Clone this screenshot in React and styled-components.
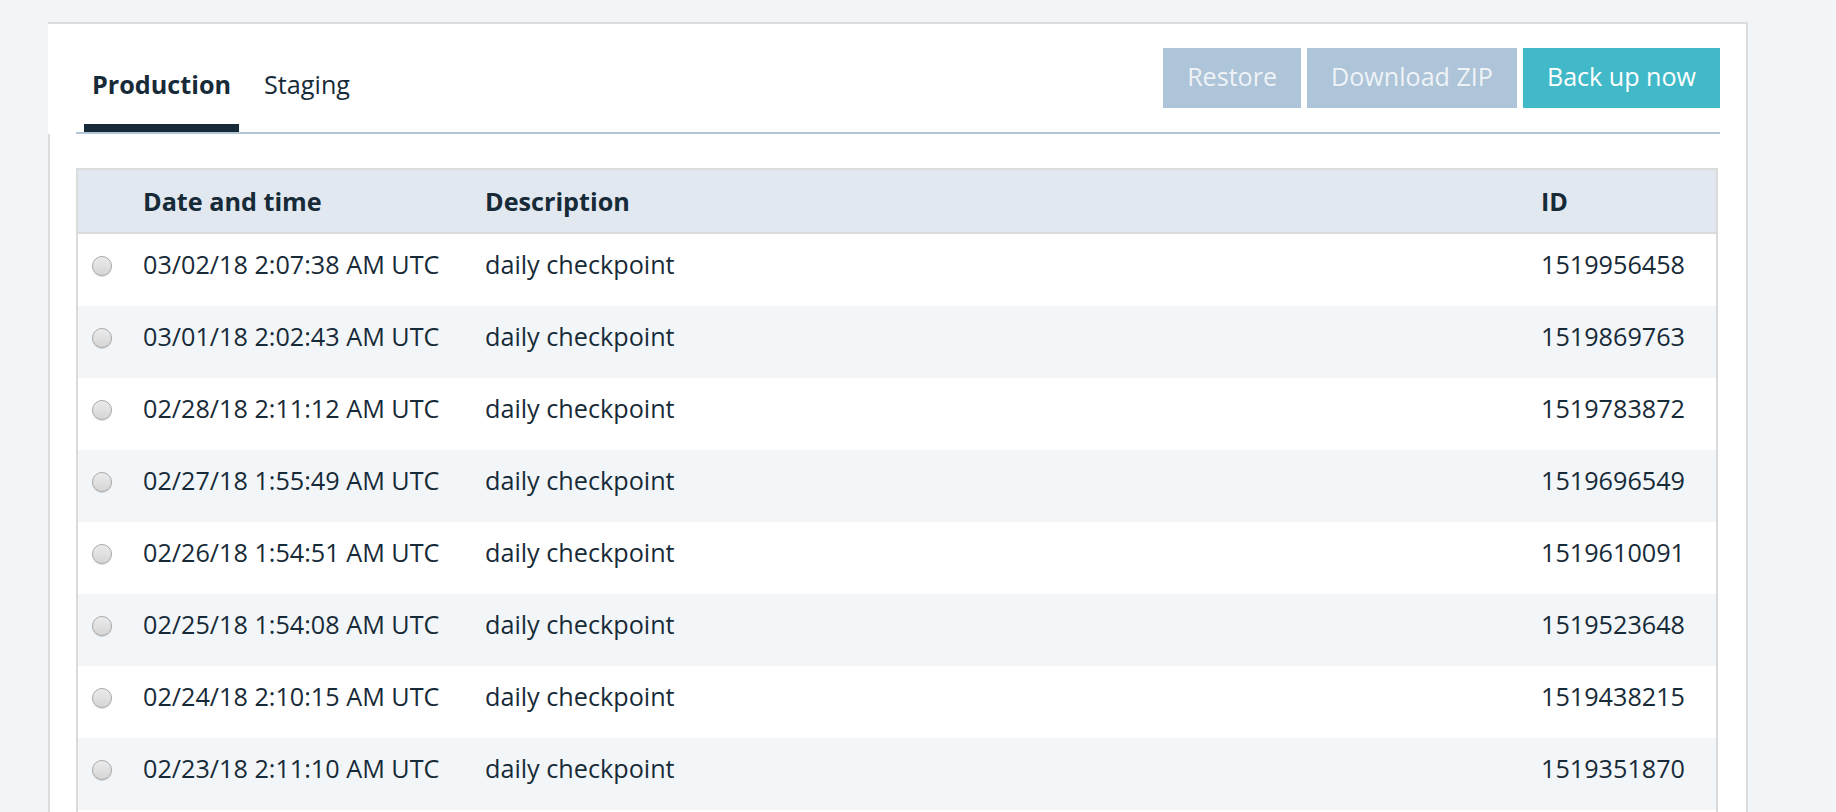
import React from 'react';
import styled, { createGlobalStyle } from 'styled-components';

const backups = [
    { date: '03/02/18 2:07:38 AM UTC', desc: 'daily checkpoint', id: '1519956458' },
    { date: '03/01/18 2:02:43 AM UTC', desc: 'daily checkpoint', id: '1519869763' },
    { date: '02/28/18 2:11:12 AM UTC', desc: 'daily checkpoint', id: '1519783872' },
    { date: '02/27/18 1:55:49 AM UTC', desc: 'daily checkpoint', id: '1519696549' },
    { date: '02/26/18 1:54:51 AM UTC', desc: 'daily checkpoint', id: '1519610091' },
    { date: '02/25/18 1:54:08 AM UTC', desc: 'daily checkpoint', id: '1519523648' },
    { date: '02/24/18 2:10:15 AM UTC', desc: 'daily checkpoint', id: '1519438215' },
    { date: '02/23/18 2:11:10 AM UTC', desc: 'daily checkpoint', id: '1519351870' },
];

const GlobalStyle = createGlobalStyle`
    html, body {
        margin: 0;
        padding: 0;
        overflow: hidden;
        background: #f2f5f8;
        font-family: "Open Sans", "Noto Sans", sans-serif;
        color: #172a38;
    }
    * { box-sizing: border-box; }
`;

function App() {
    return (
        <>
            <GlobalStyle />
            <Page>
                <Card>
                    <Header>
                        <HeaderBar>
                            <Tabs>
                                <Tab active>Production</Tab>
                                <Tab>Staging</Tab>
                            </Tabs>
                            <Actions>
                                <Button disabled>Restore</Button>
                                <Button disabled>Download ZIP</Button>
                                <Button primary>Back up now</Button>
                            </Actions>
                        </HeaderBar>
                    </Header>
                    <Body>
                        <Table>
                            <HeadRow>
                                <span />
                                <span>Date and time</span>
                                <span>Description</span>
                                <span>ID</span>
                            </HeadRow>
                            {backups.map((b, i) => (
                                <Row key={b.id} alt={i % 2 === 1}>
                                    <RadioCell>
                                        <Radio type="radio" name="backup" />
                                    </RadioCell>
                                    <span>{b.date}</span>
                                    <span>{b.desc}</span>
                                    <span>{b.id}</span>
                                </Row>
                            ))}
                            <Row />
                        </Table>
                    </Body>
                </Card>
            </Page>
        </>
    );
}

const Page = styled.div`
    padding: 22px 0 0 48px;
`;

const Card = styled.div`
    width: 1700px;
    background: #fff;
    border-top: 2px solid #dcdcdc;
    border-right: 2px solid #dcdcdc;
`;

const Header = styled.div`
    padding: 24px 26px 0 28px;
`;

const HeaderBar = styled.div`
    display: flex;
    justify-content: space-between;
    align-items: flex-end;
    border-bottom: 2px solid #b3c6d8;
`;

const Tabs = styled.div`
    display: flex;
    gap: 17px;
    margin-left: 8px;
`;

const Tab = styled.div`
    padding: 0 8px 22px;
    font-size: 25.2px;
    line-height: 35px;
    font-weight: ${p => (p.active ? 700 : 400)};
    border-bottom: 8px solid ${p => (p.active ? '#172a38' : 'transparent')};
    cursor: pointer;
`;

const Actions = styled.div`
    display: flex;
    gap: 6px;
    margin-bottom: 24px;
`;

const Button = styled.button`
    height: 60px;
    padding: 0 24px 4px;
    border: none;
    border-radius: 0;
    font-family: "Open Sans", sans-serif;
    font-size: 25.1px;
    line-height: 56px;
    color: ${p => (p.primary ? '#ffffff' : '#eef3f7')};
    background: ${p => (p.primary ? '#41b9c8' : '#aec4d8')};
    cursor: pointer;
`;

const Body = styled.div`
    border-left: 2px solid #dcdcdc;
    padding: 34px 28px 0 26px;
`;

const Table = styled.div`
    border: 2px solid #dbdbdb;
    border-bottom: none;
`;

const cols = '65px 342px 1056px 1fr';

const HeadRow = styled.div`
    display: grid;
    grid-template-columns: ${cols};
    align-items: center;
    height: 64px;
    background: #e1e8ef;
    border-bottom: 2px solid #dbdbdb;
    font-size: 25.2px;
    line-height: 35px;
    font-weight: 700;
`;

const Row = styled.div`
    display: grid;
    grid-template-columns: ${cols};
    align-items: center;
    height: 72px;
    padding-bottom: 12px;
    background: ${p => (p.alt ? '#f2f6f9' : '#ffffff')};
    font-size: 25.2px;
    line-height: 35px;
`;

const RadioCell = styled.span`
    display: flex;
    padding-left: 14px;
    padding-top: 3px;
`;

const Radio = styled.input`
    appearance: none;
    -webkit-appearance: none;
    margin: 0;
    width: 20px;
    height: 20px;
    border-radius: 50%;
    border: 1px solid #a9a9a9;
    background: linear-gradient(#ebebeb, #d6d6d6);
    box-shadow: 0 1px 1px rgba(0, 0, 0, 0.15);
    cursor: pointer;
`;

export default App;
